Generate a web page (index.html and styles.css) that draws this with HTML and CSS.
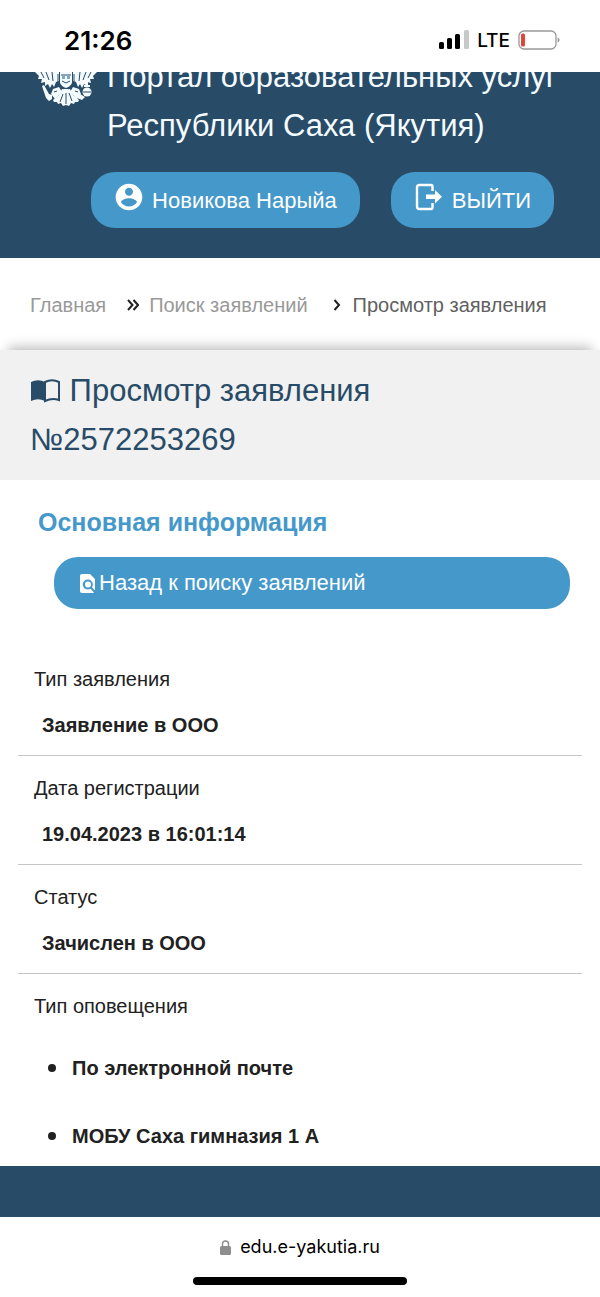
FILE: index.html
```html
<!DOCTYPE html>
<html lang="ru">
<head>
    <meta charset="UTF-8">
    <meta name="viewport" content="width=device-width, initial-scale=1.0">
    <title>Просмотр заявления</title>
    <link rel="stylesheet" href="styles.css">
</head>
<body>

<div class="status-bar">
    <span class="time">21:26</span>
    <div class="status-icons">
        <svg width="30" height="20" viewBox="0 0 30 20">
            <rect x="0" y="12" width="5" height="7" rx="1.5"/>
            <rect x="8" y="8" width="5" height="11" rx="1.5"/>
            <rect x="16" y="4" width="5" height="15" rx="1.5"/>
            <rect x="25" y="0" width="5" height="19" rx="1.5" fill="#c8c8c8"/>
        </svg>
        <span class="network">LTE</span>
        <svg width="42" height="20" viewBox="0 0 42 20">
            <rect x="1" y="1" width="37" height="18" rx="5" fill="none" stroke="#999" stroke-width="1.3"/>
            <rect x="3" y="3.500" width="4" height="13" rx="1.500" fill="#e0453c"/>
            <path d="M39.600 7.500q2 .8 2 2.500t-2 2.500z" fill="#999"/>
        </svg>
    </div>
</div>

<header class="header">
    <div class="brand">
        <svg class="emblem" width="62" height="35" viewBox="0 0 62 35">
            <g fill="#f4fbff">
                <path d="M0 0h24v9l-3 1-2 5-2-3-2 4-2-4-3 2v-4l-4 1 1-4-4 0 1-3z"/>
                <path d="M62 0H38v9l3 1 2 5 2-3 2 4 2-4 3 2v-4l4 1-1-4 4 0-1-3z"/>
                <path d="M25 0h12v11q-2 4-6 5-4-1-6-5z"/>
                <path d="M7 14l2-1 5 9 3 1v4l-3 2-3-3-1-3z"/>
                <path d="M24 15l-6 2-2 5 4 5 3-3 4-4zM38 15l6 2 2 5-4 5-3-3-4-4z"/>
                <path d="M45 22l5 3-3 3-5-2z"/>
                <circle cx="52" cy="20" r="4.500"/>
                <path d="M51 10h2v3h2v2h-6v-2h2z"/>
                <path d="M27 17h8l3 6 6 5-1 2-3 0-1 2-3-1-2 3-3-1-3 1-2-3-3 1-1-2-3 0-1-2 6-5z"/>
            </g>
            <path d="M6 0l3 6M11 0l3 8M17 0l1 9M56 0l-3 6M51 0l-3 8M45 0l-1 9M26 3h10M27 9l4 2 4-2M23 2v8M39 2v8M26 15l3 2M36 15l-3 2M28 22l-3 8M31 21v11M34 21l3 8M19 20l3-1M43 20l-3-1M48 20h8" fill="none" stroke="#284b67" stroke-width="1"/>
            <path d="M27 4h3v3h-3zM32 4h3v3h-3z" fill="#7fa9c4"/>
        </svg>
        <div class="brand-name">Портал образовательных услуг Республики Саха (Якутия)</div>
    </div>
    <div class="header-buttons">
        <button class="button">
            <svg width="32" height="32" viewBox="0 0 24 24" fill="#fff">
                <path d="M12 2C6.480 2 2 6.480 2 12s4.480 10 10 10 10-4.480 10-10S17.520 2 12 2zm0 3c1.660 0 3 1.340 3 3s-1.340 3-3 3-3-1.340-3-3 1.340-3 3-3zm0 14.200c-2.500 0-4.710-1.280-6-3.220.03-1.990 4-3.080 6-3.080 1.990 0 5.970 1.090 6 3.080-1.290 1.940-3.500 3.220-6 3.220z"/>
            </svg>
            <span>Новикова Нарыйа</span>
        </button>
        <button class="button">
            <svg width="32" height="32" viewBox="0 0 32 32">
                <path d="M19.500 10V5.500Q19.500 4 18 4H6.500Q4 4 4 6.500v19Q4 28 6.500 28H18q1.500 0 1.500-1.500V22" fill="none" stroke="#fff" stroke-width="2.400"/>
                <path d="M13 13.500h9V9l7 6.800-7 6.700V18h-9z" fill="#fff"/>
            </svg>
            <span>ВЫЙТИ</span>
        </button>
    </div>
</header>

<nav class="breadcrumb">
    <a href="#">Главная</a>
    <svg class="sep-double" width="12" height="12" viewBox="0 0 12 12"><path d="M1 1l4.500 5L1 11M6.500 1L11 6l-4.500 5"/></svg>
    <a href="#">Поиск заявлений</a>
    <svg class="sep" width="8" height="12" viewBox="0 0 8 12"><path d="M1.500 1l4.500 5-4.500 5"/></svg>
    <span>Просмотр заявления</span>
</nav>

<main>
    <div class="page-title">
        <h1>
            <svg class="book-icon" width="31" height="24" viewBox="0 0 31 24">
                <path d="M1 3Q8-.5 15 3v19Q8 18.500 1 22z" fill="#284b67"/>
                <path d="M15 3q7-3.500 14 0v18q-7-2.500-14 1z" fill="none" stroke="#284b67" stroke-width="2"/>
            </svg>
            Просмотр заявления №2572253269
        </h1>
    </div>

    <section class="info">
        <h2>Основная информация</h2>
        <button class="button back-button">
            <svg width="15" height="19" viewBox="0 0 15 19">
                <path d="M2 0h8l5 5v11.500L12 13.200A5 5 0 1 0 10.500 14.700l3.500 3.800q-.6.500-1.500.5H2q-2 0-2-2V2Q0 0 2 0z" fill="#fff"/>
                <circle cx="8" cy="10.500" r="3" fill="#fff"/>
            </svg>
            <span>Назад к поиску заявлений</span>
        </button>

        <dl class="fields">
            <div class="field">
                <dt>Тип заявления</dt>
                <dd>Заявление в ООО</dd>
            </div>
            <div class="field">
                <dt>Дата регистрации</dt>
                <dd>19.04.2023 в 16:01:14</dd>
            </div>
            <div class="field">
                <dt>Статус</dt>
                <dd>Зачислен в ООО</dd>
            </div>
            <div class="field">
                <dt>Тип оповещения</dt>
                <dd>
                    <ul>
                        <li>По электронной почте</li>
                        <li>МОБУ Саха гимназия 1 А</li>
                    </ul>
                </dd>
            </div>
        </dl>
    </section>
</main>

<footer class="footer"></footer>

<div class="address-bar">
    <div class="address">
        <svg width="11" height="15" viewBox="0 0 11 15">
            <rect x="0" y="6" width="11" height="9" rx="1.500" fill="#8e8e8e"/>
            <path d="M2.500 7V4a3 3 0 0 1 6 0v3" fill="none" stroke="#8e8e8e" stroke-width="1.400"/>
        </svg>
        <span>edu.e-yakutia.ru</span>
    </div>
    <div class="home-indicator"></div>
</div>

</body>
</html>
```
FILE: styles.css
```css
* {
    box-sizing: border-box;
}

body {
    font-family: "Liberation Sans", Arial, sans-serif;
    font-size: 20px;
    color: #212121;
    background-color: #fff;
    margin: 0;
}

svg {
    flex-shrink: 0;
}

/* phone status bar */
.status-bar {
    display: flex;
    justify-content: space-between;
    align-items: center;
    height: 72px;
    padding: 8px 40px 0 64px;
    font-family: Inter, sans-serif;
    color: #000;
}

.time {
    font-size: 26px;
    font-weight: 600;
}

.status-icons {
    display: flex;
    align-items: center;
    gap: 8px;
}

.network {
    font-size: 19px;
    font-weight: 500;
}

/* header */
.header {
    background-color: #284b67;
    color: #f4fbff;
    padding: 0 30px 30px 35px;
}

.brand {
    display: flex;
    align-items: flex-end;
    gap: 10px;
    height: 78px;
    overflow: hidden;
}

.emblem {
    align-self: flex-start;
}

.brand-name {
    font-size: 31px;
    line-height: 49px;
}

.header-buttons {
    display: flex;
    justify-content: flex-end;
    gap: 31px;
    padding-top: 22px;
    padding-right: 16px;
}

.button {
    display: flex;
    align-items: center;
    height: 56px;
    padding: 2px 23px 0 22px;
    gap: 7px;
    border: none;
    border-radius: 24px;
    background-color: #4598ca;
    color: #fff;
    font-family: inherit;
    font-size: 22px;
    white-space: nowrap;
    cursor: pointer;
}

.header-buttons svg {
    margin-bottom: 8px;
}

/* breadcrumb */
.breadcrumb {
    display: flex;
    align-items: center;
    height: 92px;
    padding: 2px 30px 0;
    color: #616161;
    white-space: nowrap;
}

.breadcrumb a {
    color: #999;
    text-decoration: none;
}

.breadcrumb path {
    fill: none;
    stroke: #212121;
    stroke-width: 2;
}

.sep-double {
    margin: 0 10px 0 21px;
}

.sep {
    margin: 0 12px 0 25px;
}

.page-title {
    background-color: #f1f1f1;
    padding: 16px 30px;
    box-shadow: 0 -10px 12px -8px rgba(0, 0, 0, 0.3);
}

h1 {
    margin: 0;
    max-width: 400px;
    font-size: 31px;
    font-weight: normal;
    line-height: 49px;
    color: #284b67;
}

.book-icon {
    vertical-align: -2px;
}

/* application info */
.info {
    padding: 22px 18px 0;
}

h2 {
    margin: 0;
    padding-left: 20px;
    font-size: 25px;
    line-height: 40px;
    color: #4598ca;
}

.back-button {
    width: calc(100% - 48px);
    height: 52px;
    margin: 15px 12px 38px 36px;
    padding: 0 26px;
    gap: 4px;
}

.fields {
    margin: 0;
}

.field {
    padding: 9px 16px 7px;
    border-bottom: 1px solid #c6c6c6;
    line-height: 46px;
}

.field:last-child {
    border-bottom: none;
}

dd {
    margin: 0;
    padding-left: 8px;
    font-weight: bold;
}

/* bullets are drawn by hand, the default ones are too small */
ul {
    display: flex;
    flex-direction: column;
    gap: 22px;
    margin: 0;
    padding: 16px 0 0 6px;
    list-style: none;
}

li {
    display: flex;
    align-items: center;
    gap: 16px;
}

li::before {
    content: "";
    width: 8px;
    height: 8px;
    border-radius: 50%;
    background-color: #212121;
}

.footer {
    height: 51px;
    background-color: #284b67;
}

/* browser address bar */
.address-bar {
    padding: 16px 0 10px;
    color: #000;
}

.address {
    display: flex;
    justify-content: center;
    align-items: center;
    gap: 9px;
    font-family: Inter, sans-serif;
    font-size: 18px;
    line-height: 28px;
}

.home-indicator {
    width: 214px;
    height: 8px;
    margin: 16px auto 0;
    border-radius: 4px;
    background-color: #000;
}
```
